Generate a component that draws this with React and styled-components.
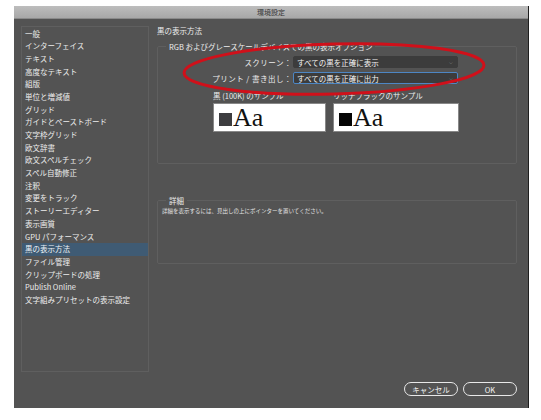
import styled, { createGlobalStyle } from "styled-components";

const Global = createGlobalStyle`
    html, body {
        margin: 0;
        background: #ffffff;
        font-family: "Noto Sans CJK JP", "Noto Sans", sans-serif;
    }
`;

const Window = styled.div`
    margin: 6px 0 0 14px;
    width: 515px;
    height: 402px;
    background: #535353;
    border-right: 1px solid #1e1e1e;
    display: flex;
    flex-direction: column;
    box-sizing: border-box;
`;

const TitleBar = styled.div`
    height: 12px;
    background: linear-gradient(#bdbdbd, #a8a8a8);
    border-bottom: 1px solid #8a8a8a;
    color: #333;
    font-size: 7px;
    line-height: 12px;
    text-align: center;
`;

const Body = styled.div`
    flex: 1;
    display: flex;
    flex-direction: column;
    padding: 7px 11px 0 7px;
`;

const Main = styled.div`
    display: flex;
    gap: 8px;
`;

const Sidebar = styled.div`
    width: 128px;
    height: 346px;
    border: 1px solid #5f5f5f;
    box-sizing: border-box;
    padding-top: 0.5px;
`;

const NavItem = styled.div`
    height: 12.7px;
    line-height: 12.7px;
    padding-left: 3px;
    font-size: 7.5px;
    color: ${(p) => (p.$active ? "#eef3f7" : "#ededed")};
    background: ${(p) => (p.$active ? "#3f5b74" : "transparent")};
    white-space: nowrap;
`;

const Content = styled.div`
    flex: 1;
    display: flex;
    flex-direction: column;
    position: relative;
`;

const Heading = styled.div`
    font-size: 7.5px;
    color: #ededed;
    line-height: 10px;
`;

const Group = styled.fieldset`
    margin: ${(p) => p.$top}px 0 0;
    padding: 0;
    height: ${(p) => p.$h}px;
    border: 1px solid #5f5f5f;
    border-radius: 2px;
    box-sizing: border-box;
    min-width: 0;
`;

const Legend = styled.legend`
    margin-left: 8px;
    padding: 0 3px;
    font-size: 7.5px;
    color: #ededed;
    line-height: 9px;
`;

const FieldRow = styled.div`
    display: flex;
    align-items: center;
    margin-top: ${(p) => p.$top}px;
`;

const FieldLabel = styled.div`
    width: 134px;
    text-align: right;
    padding-right: 1px;
    font-size: 7.5px;
    color: #ededed;
    letter-spacing: 0.5px;
    white-space: nowrap;
`;

const Select = styled.div`
    width: 165px;
    height: 12px;
    box-sizing: border-box;
    background: #3c3c3c;
    border: 1px solid ${(p) => (p.$focus ? "#4d86c4" : "#3c3c3c")};
    border-radius: 2px;
    display: flex;
    align-items: center;
    justify-content: space-between;
    padding: 0 4px 0 3px;
    font-size: 7.5px;
    color: #f4f4f4;
`;

const Chevron = styled.span`
    font-size: 5px;
    color: #bbb;
`;

const Samples = styled.div`
    display: flex;
    gap: 7px;
    margin: 7px 0 0 55px;
`;

const Sample = styled.div`
    display: flex;
    flex-direction: column;
`;

const SampleLabel = styled.div`
    font-size: 7.5px;
    color: #ededed;
    line-height: 9px;
    margin-bottom: 3px;
`;

const SampleBox = styled.div`
    width: ${(p) => p.$w}px;
    height: 29px;
    background: #ffffff;
    border: 1px solid #888;
    box-sizing: border-box;
    display: flex;
    align-items: center;
    padding-left: 5px;
    gap: 1px;
`;

const Swatch = styled.div`
    width: 13px;
    height: 13px;
    background: ${(p) => p.$color};
    margin-top: 3px;
`;

const SampleText = styled.span`
    font-family: "Liberation Serif", "Times New Roman", serif;
    font-size: 26px;
    line-height: 26px;
    color: #111;
`;

const Detail = styled.div`
    font-size: 5.5px;
    color: #e4e4e4;
    padding-left: 4px;
    margin-top: 3px;
    line-height: 7px;
`;

const Footer = styled.div`
    margin-top: auto;
    margin-bottom: 12px;
    display: flex;
    justify-content: flex-end;
    gap: 5px;
`;

const Button = styled.div`
    width: 54px;
    height: 14px;
    box-sizing: border-box;
    border: 1px solid #e8e8e8;
    border-radius: 8px;
    font-size: 7.5px;
    color: #f4f4f4;
    display: flex;
    align-items: center;
    justify-content: center;
`;

const Annotation = styled.svg`
    position: absolute;
    left: 18px;
    top: 16px;
    pointer-events: none;
`;

const navItems = [
    "一般", "インターフェイス", "テキスト", "高度なテキスト", "組版", "単位と増減値",
    "グリッド", "ガイドとペーストボード", "文字枠グリッド", "欧文辞書", "欧文スペルチェック",
    "スペル自動修正", "注釈", "変更をトラック", "ストーリーエディター", "表示画質",
    "GPU パフォーマンス", "黒の表示方法", "ファイル管理", "クリップボードの処理",
    "Publish Online", "文字組みプリセットの表示設定",
];

const App = () => (
    <>
        <Global />
        <Window>
            <TitleBar>環境設定</TitleBar>
            <Body>
                <Main>
                    <Sidebar>
                        {navItems.map((item) => (
                            <NavItem key={item} $active={item === "黒の表示方法"}>{item}</NavItem>
                        ))}
                    </Sidebar>
                    <Content>
                        <Heading>黒の表示方法</Heading>
                        <Group $top={6} $h={122}>
                            <Legend>RGB およびグレースケールデバイスでの黒の表示オプション</Legend>
                            <FieldRow $top={5}>
                                <FieldLabel>スクリーン：</FieldLabel>
                                <Select>すべての黒を正確に表示<Chevron>⌵</Chevron></Select>
                            </FieldRow>
                            <FieldRow $top={4}>
                                <FieldLabel>プリント / 書き出し：</FieldLabel>
                                <Select $focus>すべての黒を正確に出力<Chevron>⌵</Chevron></Select>
                            </FieldRow>
                            <Samples>
                                <Sample>
                                    <SampleLabel>黒 (100K) のサンプル</SampleLabel>
                                    <SampleBox $w={113}>
                                        <Swatch $color="#3d3d40" />
                                        <SampleText>Aa</SampleText>
                                    </SampleBox>
                                </Sample>
                                <Sample>
                                    <SampleLabel>リッチブラックのサンプル</SampleLabel>
                                    <SampleBox $w={126}>
                                        <Swatch $color="#050505" />
                                        <SampleText>Aa</SampleText>
                                    </SampleBox>
                                </Sample>
                            </Samples>
                        </Group>
                        <Group $top={32} $h={68}>
                            <Legend>詳細</Legend>
                            <Detail>詳細を表示するには、見出しの上にポインターを置いてください。</Detail>
                        </Group>
                        <Annotation width="320" height="60" viewBox="0 0 320 60">
                            <ellipse cx="159" cy="27" rx="150" ry="25" fill="none" stroke="#d0101a" strokeWidth="3" transform="rotate(-1.5 159 27)" />
                        </Annotation>
                    </Content>
                </Main>
                <Footer>
                    <Button>キャンセル</Button>
                    <Button>OK</Button>
                </Footer>
            </Body>
        </Window>
    </>
);

export default App;
